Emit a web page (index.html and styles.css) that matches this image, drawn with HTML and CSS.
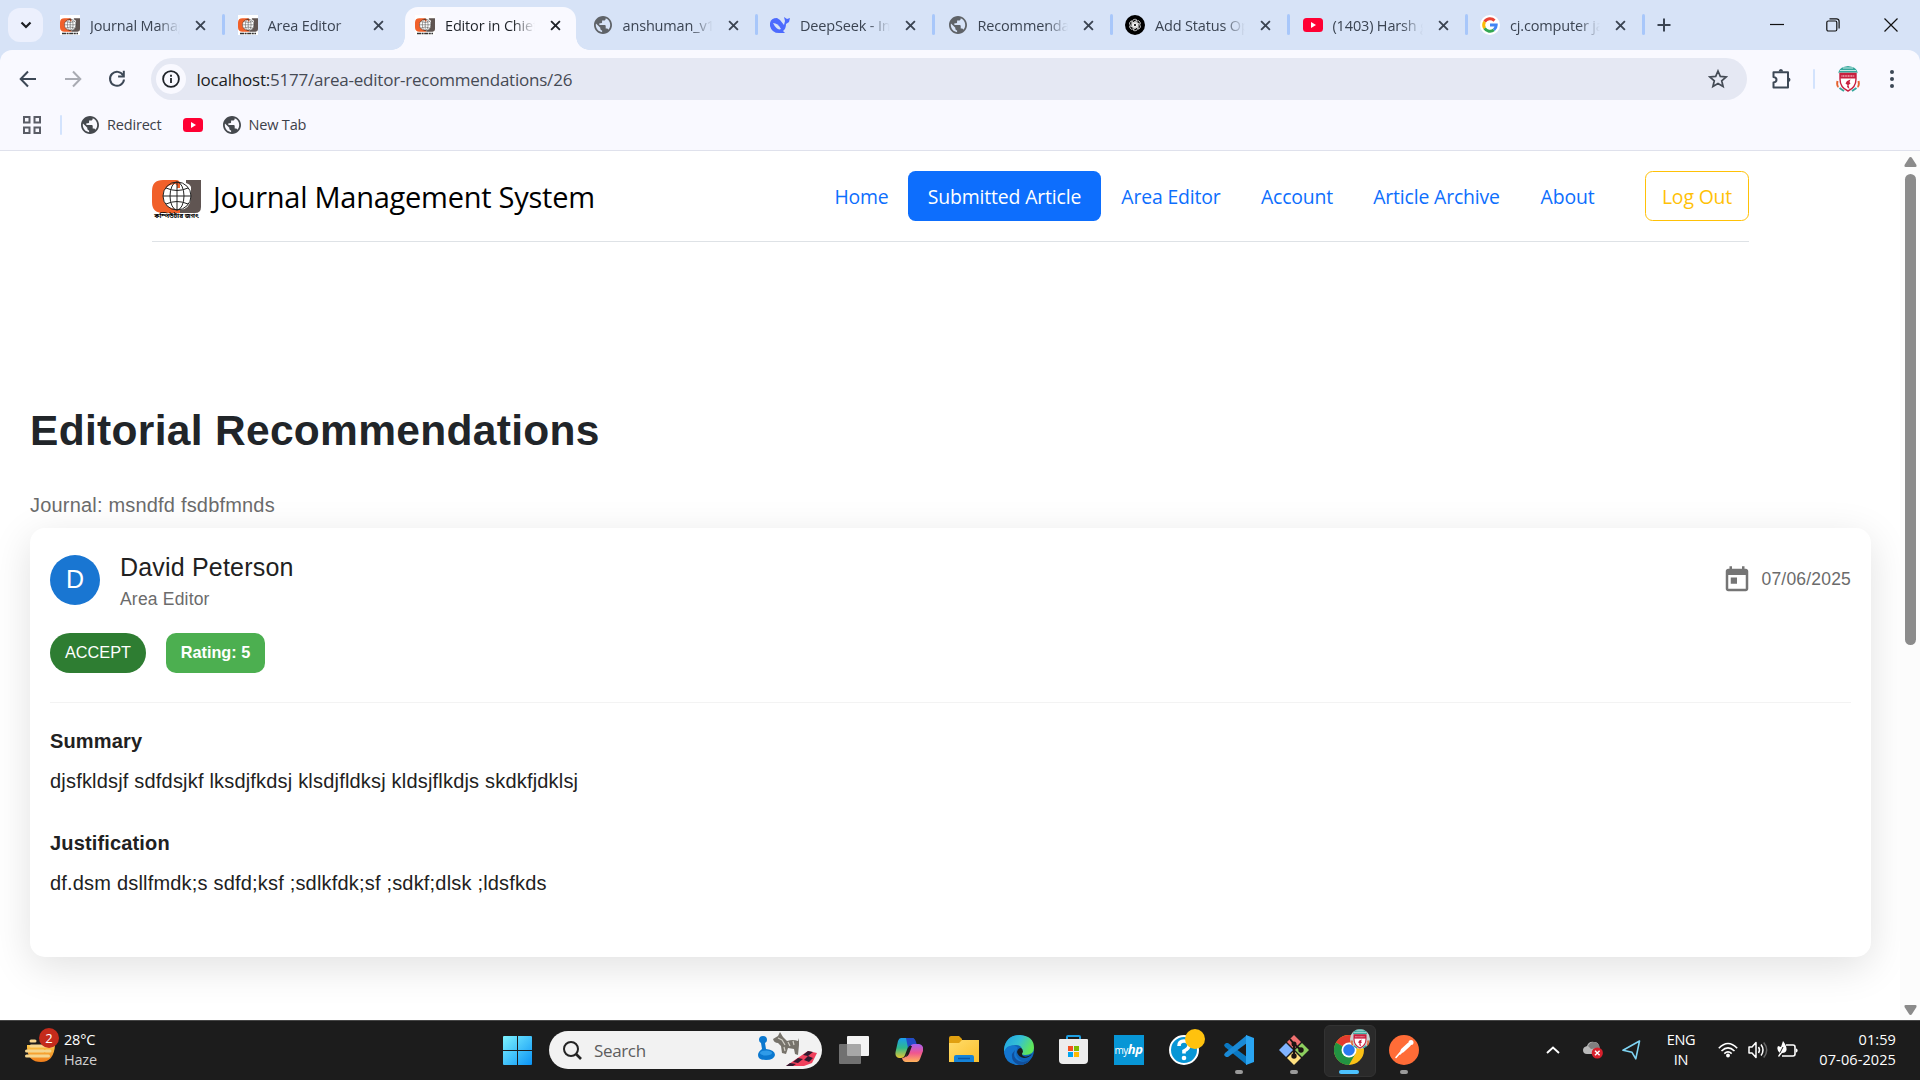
FILE: index.html
```html
<!DOCTYPE html>
<html lang="en">
<head>
<meta charset="utf-8">
<title>Editor in Chief</title>
<link rel="stylesheet" href="styles.css">
</head>
<body>
<svg class="defs" width="0" height="0">
  <defs>
    <linearGradient id="win" x1="0" y1="0" x2="1" y2="1"><stop offset="0" stop-color="#7df3ff"/><stop offset="1" stop-color="#0a93f5"/></linearGradient>
    <linearGradient id="cop1" x1="0" y1="0" x2="0" y2="1"><stop offset="0" stop-color="#1b9df0"/><stop offset=".5" stop-color="#2fb98a"/><stop offset="1" stop-color="#e8c531"/></linearGradient>
    <linearGradient id="cop2" x1="0" y1="0" x2="0" y2="1"><stop offset="0" stop-color="#a75ff0"/><stop offset=".5" stop-color="#f0568f"/><stop offset="1" stop-color="#ffb45a"/></linearGradient>
    <linearGradient id="edge1" x1="0" y1="0" x2="1" y2=".4"><stop offset="0" stop-color="#1ea0e4"/><stop offset=".55" stop-color="#35c1d4"/><stop offset="1" stop-color="#5fe65a"/></linearGradient>
    <linearGradient id="fold" x1="0" y1="0" x2="1" y2="1"><stop offset="0" stop-color="#ffdc6b"/><stop offset="1" stop-color="#fbc02d"/></linearGradient>
    <linearGradient id="sun" x1="0" y1="0" x2="0" y2="1"><stop offset="0" stop-color="#fbc748"/><stop offset="1" stop-color="#f07d1a"/></linearGradient>
    <symbol id="x" viewBox="0 0 10 10"><path d="M1 1l8 8M9 1l-8 8" fill="none" stroke="currentColor" stroke-width="1.7"/></symbol>
    <symbol id="globe" viewBox="2 2 20 20"><path fill="currentColor" d="M12 2C6.480 2 2 6.480 2 12s4.480 10 10 10 10-4.480 10-10S17.520 2 12 2zm-1 17.930c-3.950-.490-7-3.850-7-7.930 0-.620.080-1.210.210-1.790L9 15v1c0 1.100.9 2 2 2v1.930zm6.900-2.540c-.260-.810-1-1.390-1.900-1.390h-1v-3c0-.550-.450-1-1-1H8v-2h2c.550 0 1-.450 1-1V7h2c1.100 0 2-.9 2-2v-.410c2.930 1.190 5 4.060 5 7.410 0 2.080-.8 3.970-2.100 5.390z"/></symbol>
    <symbol id="cj" viewBox="0 0 49 33"><circle cx="25" cy="16" r="14.500" fill="#fff"/><path d="M11 0h13q4 0 4 4v4h-3q1-4-3-4-11 2-11 12 0 11 12 13l5 1v3H11Q0 33 0 22V11Q0 0 11 0z" fill="#f1602a"/><path d="M34 0h15v27q0 6-6 6H28v-3q10-1 11-12V7q-1-3-5-4z" fill="#605552"/><g fill="none" stroke="#222" stroke-width="1"><circle cx="25" cy="16" r="14"/><ellipse cx="25" cy="16" rx="7" ry="14"/><path d="M25 2v28M11 16h28M14 8q11 5 22 0M14 24q11-5 22 0"/></g></symbol>
    <symbol id="cj-fav" viewBox="0 0 20 20"><use href="#cj" x="0" y="3" width="20" height="14"/><path d="M2 18.500h16" stroke="#333" stroke-width="1.600" stroke-dasharray="4 .6 2 .6"/></symbol>
    <symbol id="yt" viewBox="0 0 20 14"><rect width="20" height="14" rx="3.500" fill="#ff0033"/><path d="M8 4l5 3-5 3z" fill="#fff"/></symbol>
    <symbol id="crest" viewBox="0 0 24 26"><path d="M3 5Q4 1 12 0q8 1 9 5l1 2H2z" fill="#35a79c"/><path d="M4 4.500l16 0M7 2l10 0M2 7h20" stroke="#d8f0ed" stroke-width=".9"/><path d="M4 7.500h16V13q0 8.500-8 12-8-3.500-8-12z" fill="#fff" stroke="#c8203f" stroke-width="1.400"/><path d="M4 7.500h16v5H4z" fill="#c8203f"/><path d="M5.500 10h13" stroke="#efb5bf" stroke-width="1.400" stroke-dasharray="1 .6"/><path d="M11 15l3.500-1.500-1 2.500 1 1.500-2 1.500 1 4-2.500-2 .5-2-2-1.500z" fill="#c8203f"/><path d="M1.500 15q-1 5 1 6M22.500 15q1 5-1 6" stroke="#e5622e" stroke-width="2" fill="none"/><path d="M3.500 22l4.500 3M20.500 22L16 25" stroke="#35a79c" stroke-width="2"/></symbol>
  </defs>
</svg>

<div class="browser">
  <div class="tabstrip">
    <div class="tab-search"><svg width="12" height="8" viewBox="0 0 12 8"><path d="M1.500 1.500L6 6l4.500-4.500" fill="none" stroke="#1c1e22" stroke-width="2.200"/></svg></div>
    <div class="tab"><svg class="fav fav-cj"><use href="#cj-fav"/></svg><span class="tab-title">Journal Manage</span><svg class="tab-x"><use href="#x"/></svg></div>
    <div class="tab no-sep"><svg class="fav fav-cj"><use href="#cj-fav"/></svg><span class="tab-title">Area Editor</span><svg class="tab-x"><use href="#x"/></svg></div>
    <div class="tab active no-sep"><svg class="fav fav-cj"><use href="#cj-fav"/></svg><span class="tab-title">Editor in Chief</span><svg class="tab-x"><use href="#x"/></svg></div>
    <div class="tab"><svg class="fav globe"><use href="#globe" x="1" y="1" width="18" height="18"/></svg><span class="tab-title">anshuman_v1</span><svg class="tab-x"><use href="#x"/></svg></div>
    <div class="tab"><svg class="fav" viewBox="0 0 20 20"><path d="M0 8Q1 3 7 3l3 2 4 5 1-4-1-4 3 2 3-1-1 4-3 2q0 5-3 7l2 2h-4Q2 19 0 11z" fill="#4d6bfe"/><path d="M3 8q5 0 8 6-4 2-8-6" fill="#d7e3f7"/></svg><span class="tab-title">DeepSeek - Into</span><svg class="tab-x"><use href="#x"/></svg></div>
    <div class="tab"><svg class="fav globe"><use href="#globe" x="1" y="1" width="18" height="18"/></svg><span class="tab-title">Recommendati</span><svg class="tab-x"><use href="#x"/></svg></div>
    <div class="tab"><svg class="fav" viewBox="0 0 20 20"><circle cx="10" cy="10" r="10" fill="#000"/><g fill="none" stroke="#fff" stroke-width=".7"><g id="petal"><path d="M7.500 11.400V6.500q0-2.300 2.500-2.300 1.300 0 2 1L8.500 7.200v3.600l3 1.700"/></g><use href="#petal" transform="rotate(60 10 10)"/><use href="#petal" transform="rotate(120 10 10)"/><use href="#petal" transform="rotate(180 10 10)"/><use href="#petal" transform="rotate(240 10 10)"/><use href="#petal" transform="rotate(300 10 10)"/></g></svg><span class="tab-title">Add Status Opt</span><svg class="tab-x"><use href="#x"/></svg></div>
    <div class="tab"><svg class="fav"><use href="#yt" y="3" width="20" height="14"/></svg><span class="tab-title">(1403) Harsh g</span><svg class="tab-x"><use href="#x"/></svg></div>
    <div class="tab"><svg class="fav" viewBox="0 0 20 20"><circle cx="10" cy="10" r="10" fill="#fff"/><g fill="none" stroke-width="3"><path d="M14.500 5.600A6.300 6.300 0 0 0 4.600 6.800" stroke="#ea4335"/><path d="M4.600 6.800a6.300 6.300 0 0 0 0 6.400" stroke="#fbbc05"/><path d="M4.600 13.200a6.300 6.300 0 0 0 9.300 1.700" stroke="#34a853"/><path d="M13.900 14.900A6.300 6.300 0 0 0 16.200 10H10" stroke="#4285f4"/></g></svg><span class="tab-title">cj.computer jag</span><svg class="tab-x"><use href="#x"/></svg></div>
    <svg class="new-tab" width="14" height="14"><path d="M7 .5v13M.5 7h13" stroke="#3b4452" stroke-width="2"/></svg>
    <div class="window-buttons">
      <svg width="14" height="14"><path d="M0 6.500h14" stroke="#111" stroke-width="1.200"/></svg>
      <svg width="14" height="14" fill="none" stroke="#111" stroke-width="1.200"><rect x=".8" y="3" width="10" height="10" rx="1.500"/><path d="M3.500 .8h7a2.500 2.500 0 0 1 2.600 2.600v7"/></svg>
      <svg width="14" height="14"><path d="M.5.500l13 13M13.500.500l-13 13" stroke="#111" stroke-width="1.200"/></svg>
    </div>
  </div>

  <div class="chrome">
    <div class="toolbar">
      <svg class="back" width="18" height="18" fill="none" stroke="#3d4856" stroke-width="2"><path d="M17 9H2M9 1.500L1.700 9 9 16.500"/></svg>
      <svg class="forward" width="18" height="18" fill="none" stroke="#a9abb3" stroke-width="2"><path d="M1 9h15M9 1.500L16.300 9 9 16.500"/></svg>
      <svg class="reload" width="18" height="18" fill="none" stroke="#3d4856" stroke-width="2"><path d="M15.200 5.500A7 7 0 1 0 16 9.500"/><path d="M15.800.8v5.700h-5.700"/></svg>
      <div class="omnibox">
        <span class="site-info"><svg width="18" height="18" fill="none" stroke="#1f2329" stroke-width="1.800"><circle cx="9" cy="9" r="7.900"/><path d="M9 8v5M9 4.800v1.900"/></svg></span>
        <span class="url"><b>localhost:</b>5177/area-editor-recommendations/26</span>
        <svg class="star" width="20" height="20" fill="none" stroke="#444b55" stroke-width="1.700"><path d="M10 2l2.300 5.400 5.900.5-4.500 3.900 1.400 5.700-5.100-3-5.100 3 1.400-5.700L1.800 7.900l5.900-.5z"/></svg>
      </div>
      <svg class="puzzle" width="22" height="22" fill="none" stroke="#3d4856" stroke-width="2" stroke-linejoin="round"><path d="M2.500 4.200H17V19.500H2.500v-5q3-.5 3-2.800t-3-2.700z"/><path d="M7.700 3.500a2.200 2.500 0 0 1 4.400 0zM17.500 9.500a2.500 2.300 0 0 1 0 4.500z" fill="#3d4856" stroke="none"/></svg>
      <i class="bar"></i>
      <svg class="avatar-crest" width="24" height="26"><use href="#crest"/></svg>
      <svg class="dots" width="4" height="18" fill="#3d4856"><circle cx="2" cy="2" r="2"/><circle cx="2" cy="9" r="2"/><circle cx="2" cy="16" r="2"/></svg>
    </div>
    <div class="bookmarks">
      <svg width="18" height="18" fill="none" stroke="#5a5d66" stroke-width="2"><path d="M1 1h5.500v5.500H1zM11.500 1H17v5.500h-5.500zM1 11.500h5.500V17H1zM11.500 11.500H17V17h-5.500z"/></svg>
      <i class="bar"></i>
      <svg class="bm-globe"><use href="#globe"/></svg><span class="bm-redirect">Redirect</span>
      <svg class="bm-yt" width="20" height="14"><use href="#yt"/></svg>
      <svg class="bm-globe"><use href="#globe"/></svg><span>New Tab</span>
    </div>
  </div>

  <div class="viewport">
    <div class="page">
      <header class="site-header">
        <a class="brand"><span class="logo"><svg width="49" height="33"><use href="#cj"/></svg><span class="logo-text">কম্পিউটার জগৎ</span></span><span class="brand-name">Journal Management System</span></a>
        <nav class="nav">
          <a class="n-home">Home</a><a class="n-sub current">Submitted Article</a><a class="n-area">Area Editor</a><a class="n-acc">Account</a><a class="n-arch">Article Archive</a><a class="n-about">About</a>
          <button class="logout">Log Out</button>
        </nav>
      </header>
      <main class="content">
        <h1>Editorial Recommendations</h1>
        <p class="journal">Journal: msndfd fsdbfmnds</p>
        <section class="card">
          <div class="card-head">
            <span class="avatar">D</span>
            <div class="who"><div class="name">David Peterson</div><div class="role">Area Editor</div></div>
            <div class="date"><svg width="30" height="30" viewBox="0 0 24 24" fill="#757575"><path d="M19 3h-1V1h-2v2H8V1H6v2H5c-1.110 0-1.990.9-1.990 2L3 19c0 1.100.89 2 2 2h14c1.100 0 2-.9 2-2V5c0-1.100-.9-2-2-2zm0 16H5V8h14v11zM7 10h5v5H7z"/></svg><span>07/06/2025</span></div>
          </div>
          <div class="chips"><span class="chip accept">ACCEPT</span><span class="chip rating">Rating: 5</span></div>
          <hr>
          <h2>Summary</h2>
          <p>djsfkldsjf sdfdsjkf lksdjfkdsj klsdjfldksj kldsjflkdjs skdkfjdklsj</p>
          <h2>Justification</h2>
          <p>df.dsm dsllfmdk;s sdfd;ksf ;sdlkfdk;sf ;sdkf;dlsk ;ldsfkds</p>
        </section>
      </main>
    </div>
    <div class="scrollbar">
      <svg width="13" height="10"><path d="M6.500 0Q7.500 0 8 1l4.500 7q.5 2-1 2h-10q-1.500 0-1-2L5 1q.5-1 1.500-1z" fill="#8b8b8b"/></svg>
      <i class="thumb"></i>
      <svg class="down" width="13" height="10"><path d="M6.500 10Q7.500 10 8 9l4.500-7q.5-2-1-2h-10q-1.500 0-1 2L5 9q.5 1 1.500 1z" fill="#8b8b8b"/></svg>
    </div>
  </div>
</div>

<footer class="taskbar">
  <div class="weather">
    <svg width="36" height="40" viewBox="0 0 36 40"><path d="M3 17h28q-1 17-14 17T3 20z" fill="url(#sun)"/><g stroke="#f5d58d" stroke-width="3" stroke-linecap="round"><path d="M7 13h4M7 18h21M2.500 23h17M22 23h4M2.500 28h22"/></g><circle cx="25" cy="10" r="10" fill="#c42b1c"/><text x="25" y="15" text-anchor="middle" class="badge-num">2</text></svg>
    <div class="weather-text"><span>28°C</span><span class="dim">Haze</span></div>
  </div>
  <svg class="start" width="29" height="29" fill="url(#win)"><path d="M1 0h13v14H0V1q0-1 1-1zM15 0h13q1 0 1 1v13H15zM0 15h14v14H1q-1 0-1-1zM15 15h14v13q0 1-1 1H15z"/></svg>
  <div class="search">
    <svg width="19" height="19" fill="none" stroke="#242424" stroke-width="2"><circle cx="8" cy="8" r="7"/><path d="M13 13l5 5" stroke-width="2.600"/></svg>
    <span>Search</span>
    <svg class="game" width="60" height="34" viewBox="0 0 60 34">
      <path d="M1 7q0-4 4-4t4 4q0 2-2 3l1 6q9 1 9 6-1 5-9 5-8 0-8-5 0-3 4-6L3 10Q1 9 1 7z" fill="#0b78cf"/><ellipse cx="8" cy="20" rx="6" ry="2.600" fill="#2f9be8"/>
      <path d="M15 6l5-3 2-4 3 5 4 4q6-2 11 0l1-3v7l-1 10-3-1-1-5-6-1-2 6-4-1-1-7-3-3q-4 0-5-4z" fill="#77736b"/><path d="M20 5l4 2 3 5M30 9l2 4M35 8l1 4M26 14l1 4" stroke="#d2cfc6" stroke-width="1.200" fill="none"/>
      <path d="M28 33L50 18l9 2-5 10-8 3z" fill="#f0405c"/><path d="M50 18l5 1-5 4-5-1zM40 25l5 1-5 4-5-1zM50 23l5 2-4 4-5-2zM28 33l4-3 6 1-3 2z" fill="#321a30"/></svg>
  </div>
  <div class="apps">
    <span class="app"><svg width="30" height="28"><rect x="8" y="0" width="22" height="20" rx="1" fill="#f3f3f3"/><rect x="0" y="8" width="22" height="20" rx="1" fill="#8d8d8d" fill-opacity=".75"/></svg></span>
    <span class="app"><svg width="28" height="26" viewBox="0 0 28 26"><path d="M6 1h11q3 0 2 3l-1 2q-4 0-5 4l-3 8q-1 3-4 3H4q-5-1-3-8L3 4q1-3 3-3z" fill="url(#cop1)"/><path d="M11 1h6q3 0 4 4l1 3h-4q-4 0-5 3z" fill="#234bc7"/><path d="M22 25H11q-3 0-4-4 4 0 5-4l3-7q1-3 4-3h5q5 1 4 7l-3 8q-1 3-3 3z" fill="url(#cop2)"/><path d="M12 15l3-6h2l-3 8q-1 2-3 3z" fill="#1c1c1c"/></svg></span>
    <span class="app"><svg width="30" height="28"><path d="M0 2q0-2 2-2h8l3 3h0v6H0z" fill="#e0a010"/><path d="M0 7h10l3-3h17v22H0z" fill="url(#fold)"/><path d="M5 26v-5q0-2 2-2h16q2 0 2 2v5z" fill="#1583d8"/><path d="M9 22.500h12" stroke="#0a55a5" stroke-width="1.500"/></svg></span>
    <span class="app"><svg width="30" height="30" viewBox="0 0 30 30"><circle cx="15" cy="15" r="15" fill="#0f63b8"/><path d="M0 14Q2 0 16 0q14 1 14 13 0 7-9 7-5 0-4-2 2-2 1-4-1-4-6-4Q4 10 0 17z" fill="url(#edge1)"/><path d="M0 17q3-8 11-6 4 1 2 3-3 7 3 11 5 3 10 0-5 6-14 5Q1 28 0 17z" fill="#1476cf"/><path d="M11 15q-3 8 4 11 7 2 12-2-4 6-12 6Q7 27 8 19z" fill="#114f9b"/><path d="M17 13q2 1 2 4-2 2 0 4 4 2 9-2-3 4-8 4-6-1-7-6 1-4 4-4z" fill="#1c1c1c"/></svg></span>
    <span class="app"><svg width="29" height="30"><path d="M8 5V2q0-1 1-1h11q1 0 1 1v3" fill="none" stroke="#1ea0e4" stroke-width="2"/><path d="M0 5q0-1 1-1h27q1 0 1 1v20q0 4-4 4H4q-4 0-4-4z" fill="#ededed"/><path fill="#f25022" d="M9 11h5v5H9z"/><path fill="#7fba00" d="M15 11h5v5h-5z"/><path fill="#00a4ef" d="M9 17h5v5H9z"/><path fill="#ffb900" d="M15 17h5v5h-5z"/></svg></span>
    <span class="app"><span class="myhp">my<b>hp</b></span></span>
    <span class="app"><svg class="help" width="36" height="36"><circle cx="15" cy="21" r="14" fill="#0796d6" stroke="#fff" stroke-width="2"/><path d="M10 17q0-5 5-5t5 4.500q0 3-5 5.500v2.500" fill="none" stroke="#fff" stroke-width="3.600"/><circle cx="15" cy="29" r="2.300" fill="#fff"/><circle cx="26" cy="10" r="10" fill="#ffc20e"/></svg></span>
    <span class="app open"><svg width="30" height="30"><path d="M0 10l2-2h2l19 14v8L1 12z" fill="#0a78c2"/><path d="M0 20l2 2h2L23 8V0L1 18z" fill="#1a8ad6"/><path d="M22 0l8 3v24l-8 3z" fill="#2aa5f2"/></svg></span>
    <span class="app open"><svg width="30" height="30"><path d="M15 0l7 7-7 7-7-7z" fill="#f07070"/><path d="M7 8l7 7-7 7-7-7z" fill="#80b3ff"/><path d="M23 8l7 7-7 7-7-7z" fill="#8dcf5f"/><path d="M15 16l7 7-7 7-7-7z" fill="#ffe080"/><path d="M11 4l4 5v13M15 9l7 6" stroke="#1c1412" stroke-width="2" fill="none"/><g fill="#1c1412"><circle cx="15" cy="9" r="2.500"/><circle cx="15" cy="21" r="2.700"/><circle cx="22" cy="15" r="2.700"/></g></svg></span>
    <span class="app open focused"><svg class="chrome-icon" width="36" height="36"><circle cx="15" cy="21" r="15" fill="#fbc116"/><path d="M15 21L2 13.500A15 15 0 0 1 28 13.500H15z" fill="#e33b2e"/><path d="M2 13.500a15 15 0 0 0 13 22.500l6.500-11.500L15 21z" fill="#229342"/><circle cx="15" cy="21" r="7.500" fill="#fff"/><circle cx="15" cy="21" r="5.800" fill="#2a7af0"/><circle cx="26" cy="10" r="10" fill="#c9cfcf"/><use href="#crest" x="17" y="0" width="18" height="20"/></svg></span>
    <span class="app open"><svg width="30" height="30"><circle cx="15" cy="15" r="15" fill="#ff6c37"/><g stroke="#fff" fill="none" stroke-linecap="round"><path d="M20 9.500l-6.500 6" stroke-width="4"/><path d="M13 15.500l-6 7M15 15l-4 4" stroke-width="1.600"/></g><circle cx="22" cy="7.500" r="2.500" fill="#fff"/></svg></span>
  </div>
  <div class="tray">
    <svg class="t-chev" width="14" height="8"><path d="M1 7l6-5.500L13 7" fill="none" stroke="#fff" stroke-width="1.900"/></svg>
    <svg class="t-cloud" width="20" height="18"><path d="M4 13q-4 0-4-4 0-3 4-4 2-5 7-4 5 0 5 5v7z" fill="#b9b9b9"/><path d="M5 5q3-6 9-3 3 2 3 6-6-1-9 0z" fill="#808080"/><circle cx="14.300" cy="12" r="5.600" fill="#d8202c"/><path d="M12 9.700l4.600 4.600M16.600 9.700L12 14.300" stroke="#fff" stroke-width="1.400"/></svg>
    <svg class="t-loc" width="19" height="20"><path d="M17.500 1L1 10.300l9 2 3.800 6.500z" fill="none" stroke="#7fd4f3" stroke-width="1.600" stroke-linejoin="round"/></svg>
    <div class="lang"><span>ENG</span><span>IN</span></div>
    <svg class="t-wifi" width="20" height="16" fill="none" stroke="#fff" stroke-width="1.600"><path d="M.8 6.300q9.200-9.500 18.400 0M3.500 9q6.500-6.400 13 0M6.300 11.600q3.700-3.500 7.400 0"/><circle cx="10" cy="13.500" r="1.900" fill="#fff" stroke="none"/></svg>
    <svg class="t-vol" width="20" height="18" fill="none" stroke="#fff" stroke-width="1.500"><path d="M1 6h3l4-4.500v15L4 12H1z" stroke-linejoin="round"/><path d="M10.500 6q2 3 0 6M13 3.500q4 5.500 0 11"/><path d="M15.700 1.500q6 7.500 0 15" stroke="#666"/></svg>
    <svg class="t-bat" width="21" height="18"><path d="M9 4h7q2 0 2 2v7q0 2-2 2H5" fill="none" stroke="#fff" stroke-width="1.600"/><path d="M19 7.500q1.600 0 1.600 2t-1.600 2z" fill="#fff"/><path d="M6 0q4 5 3.500 9-.5 3-4.500 3l-3 4-1-1 2-3Q-1 9 1 5l3 1z" fill="#fff"/><path d="M3 12l3-6" stroke="#1c1c1c"/></svg>
    <div class="clock"><span>01:59</span><span>07-06-2025</span></div>
  </div>
</footer>
</body>
</html>
```
FILE: styles.css
```css
* { box-sizing: border-box; }
body { margin: 0; width: 1920px; height: 1080px; overflow: hidden; display: flex; flex-direction: column; font-family: "Open Sans", "Noto Sans", sans-serif; background: #fff; }
.defs { position: absolute; }
svg { flex: none; display: block; }
h1, h2, p, hr { margin: 0; }

.browser { height: 1020px; display: flex; flex-direction: column; background: #d7e3f7; }

/* Tab strip */
.tabstrip { height: 50px; display: flex; align-items: center; padding-left: 8px; color: #3b4452; font-size: 14.5px; letter-spacing: -.16px; }
.tab-search { width: 35px; height: 34px; margin-right: 3.500px; border-radius: 12px; background: #ecf0fd; display: grid; place-items: center; }
.tab { position: relative; width: 177.500px; height: 50px; display: flex; align-items: center; padding-left: 13.500px; flex: none; }
.tab::after { content: ""; position: absolute; right: -1px; top: 14px; width: 3px; height: 21px; border-radius: 2px; background: #a8c7fa; }
.no-sep::after { display: none; }
.fav { width: 20px; height: 20px; flex: none; }
.fav-cj { background: #fff; }
.globe { color: #5f6368; }
.tab-title { width: 90px; margin-left: 10px; padding-top: 2px; overflow: hidden; white-space: nowrap; -webkit-mask-image: linear-gradient(90deg, #000 68px, transparent 90px); mask-image: linear-gradient(90deg, #000 68px, transparent 90px); line-height: 24px; }
.tab-x { width: 11px; height: 11px; margin-left: 15px; }
.active { color: #1f2329; height: 43px; margin-top: 7px; padding-bottom: 7px; isolation: isolate; }
.active::before { content: ""; position: absolute; z-index: -1; left: 3.500px; right: 3.500px; top: 0; bottom: 0; border-radius: 13px 13px 0 0; background: #f9f9ff; }
.active::after { display: block; z-index: -2; left: -9.500px; right: -9.500px; top: auto; bottom: 0; width: auto; height: 13px; border-radius: 0; background: radial-gradient(circle at 0 0, transparent 12.500px, #f9f9ff 13px) left / 13px 13px no-repeat, radial-gradient(circle at 100% 0, transparent 12.500px, #f9f9ff 13px) right / 13px 13px no-repeat; }
.new-tab { margin-left: 12.500px; }
.window-buttons { margin-left: auto; display: flex; gap: 43px; padding-right: 22px; }
.window-buttons svg:nth-child(2) { margin: 0 1px 0 -1px; }

/* Toolbar */
.chrome { height: 101px; background: #f9f9ff; border-radius: 12px 12px 0 0; border-bottom: 1px solid #dfe1ec; }
.toolbar { height: 58px; display: flex; align-items: center; padding-left: 19px; }
.forward, .reload { margin-left: 26.500px; }
.omnibox { width: 1596px; height: 42px; margin-left: 25px; border-radius: 21px; background: #e5e8f3; display: flex; align-items: center; padding-left: 5px; }
.site-info { width: 30px; height: 30px; border-radius: 50%; background: #f9f9ff; display: grid; place-items: center; }
.url { margin-left: 10.500px; font-size: 17px; letter-spacing: -.22px; color: #454a54; }
.url b { font-weight: 400; color: #1b1d22; }
.star { margin-left: auto; margin-right: 19.500px; }
.puzzle { margin-left: 24px; }
.bar { width: 2px; height: 20px; border-radius: 1px; background: #d3e3fd; flex: none; }
.toolbar .bar { margin-left: 20px; }
.avatar-crest { margin-left: 20.500px; }
.dots { margin-left: 30px; }
.bookmarks { height: 33px; display: flex; align-items: center; padding: 0 0 0 23px; font-size: 14.500px; letter-spacing: -.18px; color: #3d4149; }
.bookmarks .bar { margin: 0 19px 0 19px; }
.bm-globe { width: 18px; height: 18px; margin-right: 8px; color: #45494e; }
.bm-redirect { width: 55.500px; }
.bm-yt { margin: 0 20px; }

/* Page */
.viewport { flex: 1; min-height: 0; display: flex; background: #fff; overflow: hidden; }
.page { width: 1900px; }
.site-header { margin: 0 151px 0 152px; height: 91px; display: flex; justify-content: space-between; align-items: center; border-bottom: 1px solid #dee2e6; }
.brand { display: flex; align-items: center; color: #000; }
.logo { position: relative; width: 49px; height: 33px; }
.logo-text { position: absolute; left: 0; right: 0; top: 33px; text-align: center; font: bold 6.500px/7px "Noto Sans Bengali", "Noto Sans", sans-serif; white-space: nowrap; }
.brand-name { margin-left: 12px; font-size: 29px; letter-spacing: -.26px; }
.nav { display: flex; font-size: 19.400px; letter-spacing: -.15px; color: #0d6efd; }
.nav a, .logout { height: 50px; line-height: 52px; text-align: center; }
.n-home { width: 93px; }
.n-sub { width: 193px; }
.n-area { width: 140px; }
.n-acc { width: 112px; }
.n-arch { width: 167px; }
.n-about { width: 95px; }
.current { background: #0d6efd; color: #fff; border-radius: 7.500px; }
.logout { width: 104px; margin-left: 30px; padding: 0; border: 1.250px solid #ffc107; border-radius: 7.500px; background: none; color: #ffc107; font: inherit; letter-spacing: inherit; line-height: 50px; }

.content { padding: 164px 29px 0 30px; font-family: "Liberation Sans", Arial, sans-serif; color: #212121; }
h1 { font-size: 42.500px; line-height: 50px; letter-spacing: .31px; color: #212529; }
.journal { margin-top: 34px; font-size: 20px; line-height: 30px; letter-spacing: .19px; color: #6b6b6b; }
.card { height: 429px; margin-top: 8px; padding: 20px; border-radius: 15px; background: #fff; box-shadow: 0 10px 40px rgba(0,0,0,.12); }
.card-head { height: 63px; display: flex; align-items: center; }
.avatar { width: 50px; height: 50px; border-radius: 50%; background: #1976d2; color: #fff; font-size: 25px; display: grid; place-items: center; }
.who { margin-left: 20px; }
.name { font-size: 25px; line-height: 40px; letter-spacing: .19px; }
.role { font-size: 17.500px; line-height: 25px; letter-spacing: .19px; color: #6b6b6b; }
.date { margin-left: auto; display: flex; align-items: center; gap: 10px; font-size: 17.500px; letter-spacing: .19px; color: #6b6b6b; }
.chips { display: flex; gap: 20px; margin-top: 21.500px; }
.chip { height: 40px; line-height: 39px; text-align: center; color: #fff; font-size: 16.250px; }
.accept { width: 96px; border-radius: 20px; background: #2e7d32; }
.rating { width: 99px; border-radius: 10px; background: #4caf50; font-weight: 700; }
hr { height: 1px; border: 0; margin: 29.500px 0 23px; background: #f3f3f3; }
h2 { font-size: 20px; line-height: 30px; letter-spacing: .15px; }
.card p { margin: 10px 0 32px; font-size: 20px; line-height: 30px; letter-spacing: .19px; }

.scrollbar { width: 20px; background: #fcfcfc; display: flex; flex-direction: column; align-items: center; padding: 6px 0 5px 1px; }
.thumb { width: 11px; height: 471px; margin-top: 7px; border-radius: 6px; background: #8b8b8b; }
.down { margin-top: auto; }

/* Taskbar */
.taskbar { height: 60px; display: flex; align-items: center; background: #1c1c1c; border-top: 1px solid #454545; padding-bottom: 1px; color: #fff; font-size: 14.500px; }
.weather { width: 503px; display: flex; align-items: center; padding-left: 24px; }
.weather > svg { margin-bottom: 5px; }
.badge-num { font-size: 13px; fill: #fff; }
.weather-text, .lang, .clock { display: flex; flex-direction: column; line-height: 20px; position: relative; top: -.5px; }
.weather-text { margin-left: 4px; letter-spacing: -.2px; }
.dim { color: #cfcfcf; }
.search { width: 273px; height: 38px; margin-left: 17px; border-radius: 19px; background: #f2f2f2; display: flex; align-items: center; padding-left: 14px; color: #5d5d5d; font-size: 17px; letter-spacing: -.35px; }
.search span { margin-left: 12px; }
.game { margin-left: auto; margin-right: 4px; overflow: visible; }
.apps { display: flex; margin-left: 4px; }
.app { position: relative; width: 55px; height: 50px; display: grid; place-items: center; }
.myhp { width: 30px; height: 30px; background: #0796d6; font: 10px/29px "Open Sans", sans-serif; letter-spacing: -.5px; text-align: center; }
.myhp b { font-style: italic; font-size: 13px; }
.help, .chrome-icon { margin: -6px 0 0 6px; }
.open::after { content: ""; position: absolute; left: 23.500px; bottom: 1px; width: 8px; height: 4px; border-radius: 2px; background: #9a9a9a; }
.focused::before { content: ""; position: absolute; left: 2.500px; top: 0; width: 50px; height: 50px; border: 1px solid #333; border-radius: 6px; background: #2a2a2a; }
.focused svg { position: relative; }
.focused::after { left: 17.500px; width: 20px; background: #4cc2ff; }
.tray { margin-left: auto; display: flex; align-items: center; padding-right: 24px; }
.t-cloud { margin-left: 23px; }
.t-loc { margin-left: 19px; }
.lang { width: 40px; margin-left: 20px; align-items: center; letter-spacing: -.3px; }
.t-wifi { margin-left: 17px; }
.t-vol { margin-left: 10px; }
.t-bat { margin-left: 9px; }
.clock { width: 80px; margin-left: 18px; align-items: flex-end; letter-spacing: .1px; }
```
